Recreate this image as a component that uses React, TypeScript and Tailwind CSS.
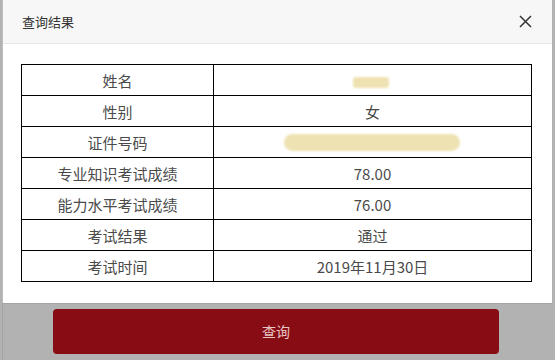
const rows: { label: string; value: React.ReactNode }[] = [
  {
    label: "姓名",
    value: <span className="inline-block h-[11px] w-[36px] translate-x-[-2px] rounded-[3px] bg-[#efe2b2] blur-[1px] align-middle" />,
  },
  { label: "性别", value: "女" },
  {
    label: "证件号码",
    value: <span className="inline-block h-[17px] w-[176px] translate-x-[-1px] rounded-full bg-[#efe2b2] blur-[1px] align-middle" />,
  },
  { label: "专业知识考试成绩", value: "78.00" },
  { label: "能力水平考试成绩", value: "76.00" },
  { label: "考试结果", value: "通过" },
  { label: "考试时间", value: "2019年11月30日" },
];

export default function App() {
  return (
    <div
      className="flex h-[360px] w-[555px] flex-col bg-[#b2b2b2] text-[#333]"
      style={{ fontFamily: '"Noto Sans CJK SC", "Liberation Sans", sans-serif' }}
    >
      <div className="ml-[2px] mr-[3px] border-l border-[#bdbdbd] bg-white">
        <div className="flex h-[44px] items-center justify-between border-b border-[#e6e6e6] bg-[#f7f7f7] pl-[19px] pr-[20px]">
          <span className="text-[13px]">查询结果</span>
          <svg width="13" height="13" viewBox="0 0 13 13" className="text-[#333]">
            <path d="M1 1 L12 12 M12 1 L1 12" stroke="currentColor" strokeWidth="1.5" />
          </svg>
        </div>
        <div className="px-[18px] pb-[21px] pt-[20px]">
          <table className="w-[511px] border-collapse text-[15px] text-[#4a4a4a]">
            <tbody>
              {rows.map((r) => (
                <tr key={r.label} className="h-[31px]">
                  <td className="w-[192px] border border-black text-center leading-none">{r.label}</td>
                  <td className="border border-black text-center leading-none">{r.value}</td>
                </tr>
              ))}
            </tbody>
          </table>
        </div>
      </div>
      <div className="ml-[2px] mr-[3px] flex-1 border-l border-t border-[#a4a4a4] pl-[50px] pt-[5px]">
        <button className="flex h-[45px] w-[446px] items-center justify-center rounded-[4px] bg-[#880c14] text-[14px] text-[#e8c6c6]">
          查询
        </button>
      </div>
    </div>
  );
}
